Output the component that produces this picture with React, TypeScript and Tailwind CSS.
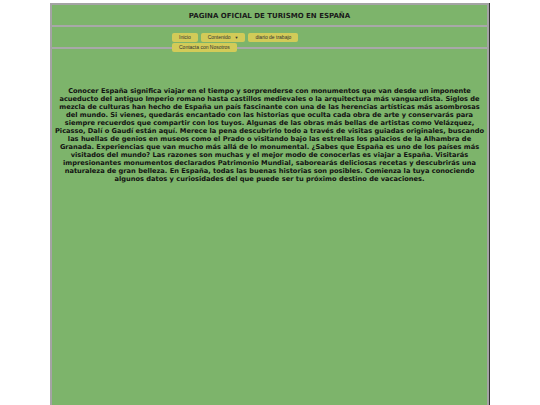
export default function App() {
  return (
    <div className="min-h-[405px] bg-white flex justify-center pt-[3px] overflow-hidden h-[405px]">
      <div className="w-[440px] border-r border-[#333] flex flex-col">
        <div className="flex-1 border-l-2 border-t-2 border-r-2 border-[#a4a4a4] bg-[#7db46b] flex flex-col">
          {/* Header */}
          <div className="h-[22px] pt-[2px] flex items-center justify-center font-['DejaVu_Sans',sans-serif] font-bold text-[7px] text-[#1a1a1a] border-b-2 border-[#a8a8a8]">
            PAGINA OFICIAL DE TURISMO EN ESPAÑA
          </div>

          {/* Nav */}
          <div className="relative h-[22px] border-b-2 border-[#a8a8a8] pl-[120px] pt-[6px] font-['Liberation_Sans',sans-serif]">
            <div className="flex gap-[3px] text-[5px] text-[#333]">
              <span className="h-[9px] px-[7px] flex items-center rounded-[2px] bg-[#d2cb58]">Inicio</span>
              <span className="h-[9px] px-[7px] flex items-center gap-[4px] rounded-[2px] bg-[#d2cb58]">
                Contenido <span className="text-[4px]">▼</span>
              </span>
              <span className="h-[9px] px-[7px] flex items-center rounded-[2px] bg-[#d2cb58]">diario de trabajo</span>
            </div>
            <div className="absolute left-[120px] top-[16px] h-[9px] px-[7px] flex items-center rounded-[2px] bg-[#d2cb58] text-[5px] text-[#333]">
              Contacta con Nosotros
            </div>
          </div>

          {/* Main */}
          <div className="flex-1 px-[2px] pt-[38px] text-center font-['DejaVu_Sans',sans-serif] font-bold text-[6.65px] leading-[8px] text-[#111]">
            Conocer España significa viajar en el tiempo y sorprenderse con monumentos que van desde un imponente acueducto del antiguo Imperio romano hasta castillos medievales o la arquitectura más vanguardista. Siglos de mezcla de culturas han hecho de España un país fascinante con una de las herencias artísticas más asombrosas del mundo. Si vienes, quedarás encantado con las historias que oculta cada obra de arte y conservarás para siempre recuerdos que compartir con los tuyos. Algunas de las obras más bellas de artistas como Velázquez, Picasso, Dalí o Gaudí están aquí. Merece la pena descubrirlo todo a través de visitas guiadas originales, buscando las huellas de genios en museos como el Prado o visitando bajo las estrellas los palacios de la Alhambra de Granada. Experiencias que van mucho más allá de lo monumental. ¿Sabes que España es uno de los países más visitados del mundo? Las razones son muchas y el mejor modo de conocerlas es viajar a España. Visitarás impresionantes monumentos declarados Patrimonio Mundial, saborearás deliciosas recetas y descubrirás una naturaleza de gran belleza. En España, todas las buenas historias son posibles. Comienza la tuya conociendo algunos datos y curiosidades del que puede ser tu próximo destino de vacaciones.
          </div>
        </div>
      </div>
    </div>
  );
}
